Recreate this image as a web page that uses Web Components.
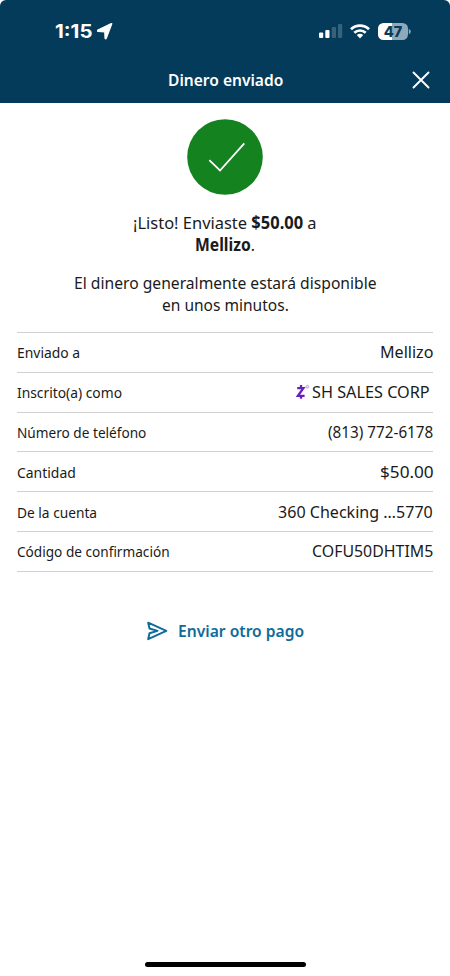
<!DOCTYPE html>
<html lang="es">
<head>
<meta charset="utf-8">
<title>Dinero enviado</title>
<style>
html,body{margin:0;padding:0;background:#fff}
</style>
</head>
<body>
<transfer-screen></transfer-screen>
<script>
const define = (name, html, connected) => {
  const t = document.createElement('template');
  t.innerHTML = html;
  customElements.define(name, class extends HTMLElement {
    constructor() {
      super();
      this.attachShadow({mode: 'open'}).append(t.content.cloneNode(true));
    }
    connectedCallback() { if (connected) connected(this, this.shadowRoot); }
  });
};

// One line of text condensed or widened to the width given in "w".
define('fit-text', `<style>
:host{display:block;flex:none;white-space:nowrap}
span{display:inline-block;transform-origin:0 50%}
</style><span><slot></slot></span>`, (el, root) => {
  const w = +el.getAttribute('w');
  const s = root.querySelector('span');
  el.style.width = w + 'px';
  s.style.transform = `scaleX(${w / s.offsetWidth})`;
});

define('status-bar', `<style>
:host{display:flex;height:62px;box-sizing:border-box;padding:20px 39px 0 55px;align-items:flex-start;justify-content:space-between;color:#fff}
.l,.r{display:flex;align-items:center;height:22px}
.time{font:700 18.5px/22px Inter,sans-serif}
.loc{margin-left:4px}
.wifi{margin:0 8px 0 7px}
.bat{width:30px;height:17px;border-radius:5.5px;background:linear-gradient(90deg,#fff 47%,#8fa8ba 47%);color:#073b5a;font:800 14.500px/17px Inter,sans-serif;text-align:center}
svg{display:block}
</style>
<div class="l"><fit-text class="time" w="37.500">1:15</fit-text>
<svg class="loc" width="16" height="17" viewBox="0 0 16 17"><path d="M14.8.7 9.3 15.2q-.6 1.2-1.3 0L7.8 8.8 1 8.4Q-.2 7.9.9 7.1L13.8.7q.8-.3 1 0z" fill="#fff" stroke="#fff" stroke-width="1.2" stroke-linejoin="round"/></svg></div>
<div class="r">
<svg width="24" height="16" viewBox="0 0 24 16"><g fill="#fff"><rect x="0" y="9.500" width="4.2" height="5.500" rx="1"/><rect x="6.3" y="7" width="4.2" height="8" rx="1"/><rect x="12.8" y="4" width="4.2" height="11" rx="1" opacity=".2"/><rect x="19" y="1" width="4.2" height="14" rx="1" opacity=".2"/></g></svg>
<svg class="wifi" width="20" height="15" viewBox="0 0 20 15"><g fill="none" stroke="#fff" stroke-width="2.7"><path d="M1 5.300a12.8 12.8 0 0 1 18 0"/><path d="M4.3 8.8a8.2 8.2 0 0 1 11.4 0"/></g><path d="M6.8 11.1a4.6 4.6 0 0 1 6.4 0L10 14.5z" fill="#fff"/></svg>
<div class="bat">47</div>
<svg width="3" height="7" viewBox="0 0 3 7"><path d="M.8.7q2 .9 2 2.8t-2 2.8z" fill="#8fa8ba"/></svg>
</div>`);

define('title-bar', `<style>
:host{display:grid;grid-template-columns:1fr auto 1fr;height:41px;align-items:center;box-sizing:border-box;padding:0 20px 6px;color:#fff;font-weight:600;font-size:16.500px;line-height:22px}
svg{justify-self:end;display:block}
</style><span></span><fit-text w="115">Dinero enviado</fit-text>
<svg width="18" height="18" viewBox="0 0 18 18"><path d="M1.5 1.5l15 15M16.500 1.500l-15 15" stroke="#fff" stroke-width="1.9" stroke-linecap="round"/></svg>`);

define('success-mark', `<style>:host{display:block;width:76px;height:76px}svg{display:block}</style>
<svg width="76" height="76" viewBox="0 0 76 76"><circle cx="38" cy="38" r="37.800" fill="#14821f"/><path d="M22.300 41.200 33 51.500 57.300 24.300" fill="none" stroke="#fff" stroke-width="1.8"/></svg>`);

define('zelle-mark', `<style>:host{display:block;margin-right:1.500px}svg{display:block}</style>
<svg width="14" height="16" viewBox="0 0 14 16"><g fill="none" stroke="#6820bd" stroke-width="2.300"><path d="M1.200 4.100H7.400L1.900 11.800H8.600"/><path d="M5 1V3.800M5 12V14.700"/></g><circle cx="11.300" cy="2.800" r="1.500" fill="#e5d5f4" stroke="#bd9bdd" stroke-width=".7"/></svg>`);

define('detail-row', `<style>
:host{display:flex;box-sizing:border-box;height:39.8px;border-bottom:1px solid #d0d0d0;align-items:center;justify-content:space-between}
.k{font-size:15px;line-height:20px}
.v{display:flex;align-items:center;font-size:17px;line-height:22px}
</style><div class="k"><slot name="label"></slot></div><div class="v"><slot></slot></div>`);

define('link-action', `<style>
:host{display:flex;justify-content:center;align-items:center;color:#0f6c99;font-weight:600;font-size:16.500px;line-height:22px;gap:10px}
svg{display:block}
</style><svg width="22" height="20" viewBox="0 0 22 20"><path d="M2.200 1.700 20.300 9.900 2.200 18.200 3.500 12.300 11.500 9.900 3.500 7.500Z" fill="none" stroke="#0f6c99" stroke-width="2" stroke-linejoin="round"/></svg>
<fit-text w="126">Enviar otro pago</fit-text>`);

define('transfer-screen', `<style>
:host{display:flex;flex-direction:column;width:450px;height:976px;overflow:hidden;background:#fff;color:#1a1a1a;font-family:"Noto Sans",sans-serif}
header{background:#043b5b;border-radius:6px 6px 0 0;height:102.500px;flex:none}
main{display:flex;flex-direction:column;align-items:center;padding:16.500px 17px 0}
p{margin:0;display:flex;flex-direction:column;align-items:center;font-size:17px;line-height:22px}
.a{margin-top:16.500px}.b{margin-top:16.500px}
b{font-weight:600}
.a b{font-weight:700}
section{align-self:stretch;margin-top:16px;border-top:1px solid #d0d0d0}
link-action{margin-top:48px}
footer{margin:auto auto 9px;width:161px;height:5px;border-radius:3px;background:#000}
</style>
<header><status-bar></status-bar><title-bar></title-bar></header>
<main><success-mark></success-mark>
<p class="a"><fit-text w="184">¡Listo! Enviaste <b>$50.00</b> a</fit-text><fit-text w="60"><b>Mellizo</b>.</fit-text></p>
<p class="b"><fit-text w="303">El dinero generalmente estará disponible</fit-text><fit-text w="127">en unos minutos.</fit-text></p>
<section>
<detail-row><fit-text slot="label" w="63">Enviado a</fit-text><fit-text w="53">Mellizo</fit-text></detail-row>
<detail-row><fit-text slot="label" w="105">Inscrito(a) como</fit-text><zelle-mark></zelle-mark><fit-text w="117.500" style="margin-right:4px">SH SALES CORP</fit-text></detail-row>
<detail-row><fit-text slot="label" w="129">Número de teléfono</fit-text><fit-text w="105">(813) 772-6178</fit-text></detail-row>
<detail-row><fit-text slot="label" w="58.500">Cantidad</fit-text><fit-text w="53.500">$50.00</fit-text></detail-row>
<detail-row><fit-text slot="label" w="80.500">De la cuenta</fit-text><fit-text w="155">360 Checking …5770</fit-text></detail-row>
<detail-row><fit-text slot="label" w="152.500">Código de confirmación</fit-text><fit-text w="121.500">COFU50DHTIM5</fit-text></detail-row>
</section>
<link-action></link-action></main>
<footer></footer>`);
</script>
</body>
</html>
